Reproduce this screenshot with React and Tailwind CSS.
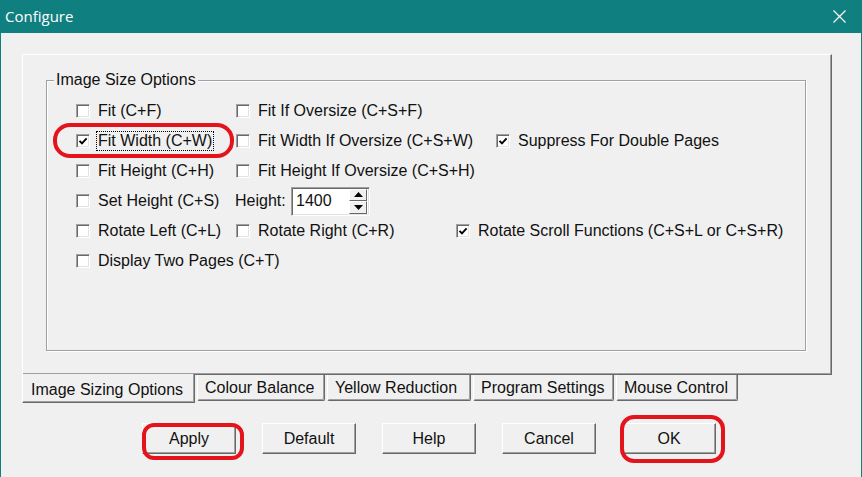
import React from 'react';

function Check({ on }) {
  return (
    <span className="w-[14px] h-[14px] shrink-0 flex items-center justify-center bg-white border border-t-[#a0a0a0] border-l-[#a0a0a0] border-r-white border-b-white shadow-[inset_1px_1px_0_#696969,inset_-1px_-1px_0_#e3e3e3]">
      {on && (
        <svg width="10" height="10" viewBox="0 0 10 10">
          <path d="M1.5 4.8 L4 7.4 L8.6 2.4" stroke="#000" strokeWidth="1.9" fill="none" />
        </svg>
      )}
    </span>
  );
}

function Opt({ label, on, focus, className = '' }) {
  return (
    <div className={`flex items-center gap-[8px] shrink-0 ${className}`}>
      <Check on={on} />
      <span className={focus ? 'outline outline-1 outline-dotted outline-black px-[1px] -ml-[1px] leading-[18px]' : 'leading-[18px]'}>
        {label}
      </span>
    </div>
  );
}

function Spinner({ value }) {
  return (
    <div className="w-[79px] h-[29px] flex items-center bg-white border border-t-[#a0a0a0] border-l-[#a0a0a0] border-r-white border-b-white shadow-[inset_1px_1px_0_#696969,inset_-1px_-1px_0_#e3e3e3] pl-[4px] pr-[2px]">
      <span className="flex-1">{value}</span>
      <div className="flex flex-col w-[18px] h-[25px]">
        {['up', 'down'].map(d => (
          <div key={d} className="flex-1 flex items-center justify-center bg-[#f0f0f0] border border-t-white border-l-white border-r-[#696969] border-b-[#696969]">
            <svg width="9" height="5" viewBox="0 0 9 5">
              <path d={d === 'up' ? 'M0 5 L4.5 0 L9 5 Z' : 'M0 0 L9 0 L4.5 5 Z'} fill="#000" />
            </svg>
          </div>
        ))}
      </div>
    </div>
  );
}

function Button({ children }) {
  return (
    <div className="w-[94px] h-[31px] flex items-center justify-center bg-[#f0f0f0] border border-t-white border-l-white border-r-[#696969] border-b-[#696969] shadow-[inset_-1px_-1px_0_#a0a0a0]">
      {children}
    </div>
  );
}

const tabs = [
  { label: 'Colour Balance', w: 'w-[128px]' },
  { label: 'Yellow Reduction', w: 'w-[144px]' },
  { label: 'Program Settings', w: 'w-[141px]' },
  { label: 'Mouse Control', w: 'w-[122px]' },
];

export default function App() {
  return (
    <div className="relative w-[862px] h-[477px] overflow-hidden bg-[#f0f0f0] border-x border-[#0f7f80] font-['Liberation_Sans',Arial,sans-serif] text-[16px] text-[#111]">
      {/* title bar */}
      <div className="h-[33px] bg-[#0f7f80] flex items-center justify-between pl-[4px] pr-[15px] text-white">
        <span className="font-['Open_Sans',sans-serif] text-[15px]">Configure</span>
        <svg width="13" height="13" viewBox="0 0 13 13">
          <path d="M0.5 0.5 L12.5 12.5 M12.5 0.5 L0.5 12.5" stroke="#fff" strokeWidth="1.2" />
        </svg>
      </div>

      {/* tab page */}
      <div className="ml-[21px] mt-[21px] w-[810px] h-[321px] border border-t-white border-l-white border-r-[#696969] border-b-[#696969] shadow-[inset_-1px_-1px_0_#a0a0a0]">
        <fieldset className="ml-[23px] mt-[16px] w-[760px] h-[280px] border border-[#a0a0a0] shadow-[inset_1px_1px_0_#fff,1px_1px_0_#fff]">
          <legend className="ml-[7px] px-[2px] leading-[18px] bg-[#f0f0f0]">Image Size Options</legend>
          <div className="pt-[7px] pl-[29px] flex flex-col">
            <div className="h-[30px] flex items-center">
              <Opt label="Fit (C+F)" className="w-[160px]" />
              <Opt label="Fit If Oversize (C+S+F)" />
            </div>
            <div className="h-[30px] flex items-center">
              <Opt label="Fit Width (C+W)" on focus className="w-[160px]" />
              <Opt label="Fit Width If Oversize (C+S+W)" className="w-[260px]" />
              <Opt label="Suppress For Double Pages" on />
            </div>
            <div className="h-[30px] flex items-center">
              <Opt label="Fit Height (C+H)" className="w-[160px]" />
              <Opt label="Fit Height If Oversize (C+S+H)" />
            </div>
            <div className="h-[30px] flex items-center">
              <Opt label="Set Height (C+S)" className="w-[159px]" />
              <span className="w-[56px]">Height:</span>
              <Spinner value="1400" />
            </div>
            <div className="h-[30px] flex items-center">
              <Opt label="Rotate Left (C+L)" className="w-[160px]" />
              <Opt label="Rotate Right (C+R)" className="w-[220px]" />
              <Opt label="Rotate Scroll Functions (C+S+L or C+S+R)" on />
            </div>
            <div className="h-[30px] flex items-center">
              <Opt label="Display Two Pages (C+T)" />
            </div>
          </div>
        </fieldset>
      </div>

      {/* tabs */}
      <div className="ml-[21px] flex items-start gap-[2px] h-[28px]">
        <div className="relative -mt-[1px] w-[173px] h-[29px] pl-[8px] pt-[4px] bg-[#f0f0f0] border-l border-r border-b border-l-white border-r-[#696969] border-b-[#696969] shadow-[inset_-1px_-1px_0_#a0a0a0]">
          Image Sizing Options
        </div>
        {tabs.map(t => (
          <div key={t.label} className={`${t.w} h-[26px] pl-[7px] flex items-center border-l border-r border-b border-l-white border-r-[#696969] border-b-[#696969] rounded-b-[2px] shadow-[inset_-1px_-1px_0_#a0a0a0]`}>
            {t.label}
          </div>
        ))}
      </div>

      {/* buttons */}
      <div className="ml-[141px] mt-[20px] flex gap-[26px]">
        {['Apply', 'Default', 'Help', 'Cancel', 'OK'].map(b => (
          <Button key={b}>{b}</Button>
        ))}
      </div>

      {/* red annotation marks */}
      <div className="pointer-events-none absolute left-[52px] top-[123px] w-[181px] h-[35px] border-[4px] border-[#e3141c] rounded-[17px]" />
      <div className="pointer-events-none absolute left-[141px] top-[423px] w-[102px] h-[37px] border-[4px] border-[#e3141c] rounded-[12px]" />
      <div className="pointer-events-none absolute left-[619px] top-[415px] w-[105px] h-[48px] border-[4px] border-[#e3141c] rounded-[14px]" />
    </div>
  );
}
